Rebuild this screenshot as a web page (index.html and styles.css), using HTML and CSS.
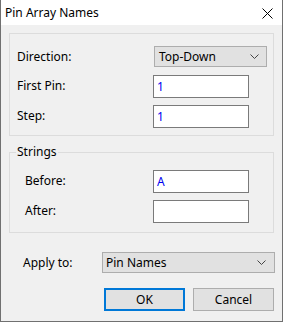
FILE: index.html
```html
<!DOCTYPE html>
<html lang="en">
<head>
  <meta charset="UTF-8">
  <meta name="viewport" content="width=device-width, initial-scale=1.0">
  <title>Pin Array Names</title>
  <link rel="stylesheet" href="styles.css">
</head>
<body>
  <div class="dialog">
    <div class="titlebar">
      <span class="title">Pin Array Names</span>
      <span class="close">
        <svg width="11" height="11" viewBox="0 0 11 11">
          <path d="M0.5 0.5 L10.5 10.5 M10.5 0.5 L0.5 10.5" stroke="#000" stroke-width="1" fill="none"/>
        </svg>
      </span>
    </div>
    <div class="content">
      <div class="group">
        <div class="row row_first">
          <label>Direction:</label>
          <div class="combo combo_dir">
            <span>Top-Down</span>
            <svg width="9" height="5" viewBox="0 0 9 5"><path d="M0.5 0.5 L4.5 4.5 L8.5 0.5" stroke="#444" fill="none"/></svg>
          </div>
        </div>
        <div class="row">
          <label>First Pin:</label>
          <input class="edit" type="text" value="1">
        </div>
        <div class="row">
          <label>Step:</label>
          <input class="edit" type="text" value="1">
        </div>
      </div>

      <fieldset class="group group_strings">
        <legend>Strings</legend>
        <div class="row">
          <label>Before:</label>
          <input class="edit" type="text" value="A">
        </div>
        <div class="row">
          <label>After:</label>
          <input class="edit" type="text" value="">
        </div>
      </fieldset>

      <div class="apply">
        <label>Apply to:</label>
        <div class="combo combo_apply">
          <span>Pin Names</span>
          <svg width="9" height="5" viewBox="0 0 9 5"><path d="M0.5 0.5 L4.5 4.5 L8.5 0.5" stroke="#444" fill="none"/></svg>
        </div>
      </div>

      <div class="buttons">
        <button class="btn btn_default">OK</button>
        <button class="btn">Cancel</button>
      </div>
    </div>
  </div>
</body>
</html>
```

FILE: styles.css
```css
* {
  box-sizing: border-box;
}
body {
  margin: 0;
  font-family: "Noto Sans", "Open Sans", sans-serif;
  font-size: 12px;
  color: #000;
}
.dialog {
  width: 283px;
  height: 322px;
  border: 1px solid #707070;
  border-top: none;
  display: flex;
  flex-direction: column;
  background-color: #f0f0f0;
}
.titlebar {
  height: 25px;
  background-color: #fff;
  display: flex;
  align-items: center;
  justify-content: space-between;
  padding: 0 9px 0 4px;
}
.title {
  font-size: 12px;
  line-height: 16px;
}
.close {
  display: flex;
  padding-top: 1px;
}
.content {
  flex: 1;
  padding: 8px 8px 0 8px;
}
.group {
  border: 1px solid #dcdcdc;
  padding: 12px 6px 8px 7px;
  margin: 0;
}
.row {
  display: flex;
  align-items: center;
  justify-content: space-between;
  height: 22px;
  margin-top: 8px;
}
.row_first {
  margin-top: 0;
  height: 21px;
  margin-bottom: 1px;
}
.row label {
  line-height: 16px;
}
.edit {
  width: 96px;
  height: 23px;
  margin: 0 18px 0 0;
  border: 1px solid #7a7a7a;
  background: #fff;
  padding: 0 3px;
  font-family: inherit;
  font-size: 12px;
  color: #0000f0;
  outline: none;
}
.combo {
  display: flex;
  align-items: center;
  justify-content: space-between;
  height: 21px;
  background-color: #e1e1e1;
  border: 1px solid #adadad;
  padding: 0 7px 0 4px;
}
.combo svg {
  display: block;
}
.combo_dir {
  width: 113px;
}
.group_strings {
  margin-top: 8px;
  padding: 10px 6px 10px 7px;
}
.group_strings legend {
  padding: 0 1px;
  margin-left: -1px;
  line-height: 16px;
}
.group_strings .row label {
  padding-left: 8px;
}
.group_strings .row:first-of-type {
  margin-top: 0;
}
.apply {
  display: flex;
  align-items: center;
  justify-content: space-between;
  margin-top: 19px;
  padding-left: 14px;
  margin-right: -1px;
}
.combo_apply {
  width: 173px;
  padding-left: 3px;
  padding-right: 8px;
}
.buttons {
  display: flex;
  justify-content: flex-end;
  gap: 8px;
  margin-top: 15px;
}
.btn {
  width: 81px;
  height: 23px;
  background-color: #e1e1e1;
  border: 1px solid #adadad;
  font-family: inherit;
  font-size: 12px;
  color: #000;
  padding: 0;
}
.btn_default {
  border: 2px solid #0078d7;
}
```
